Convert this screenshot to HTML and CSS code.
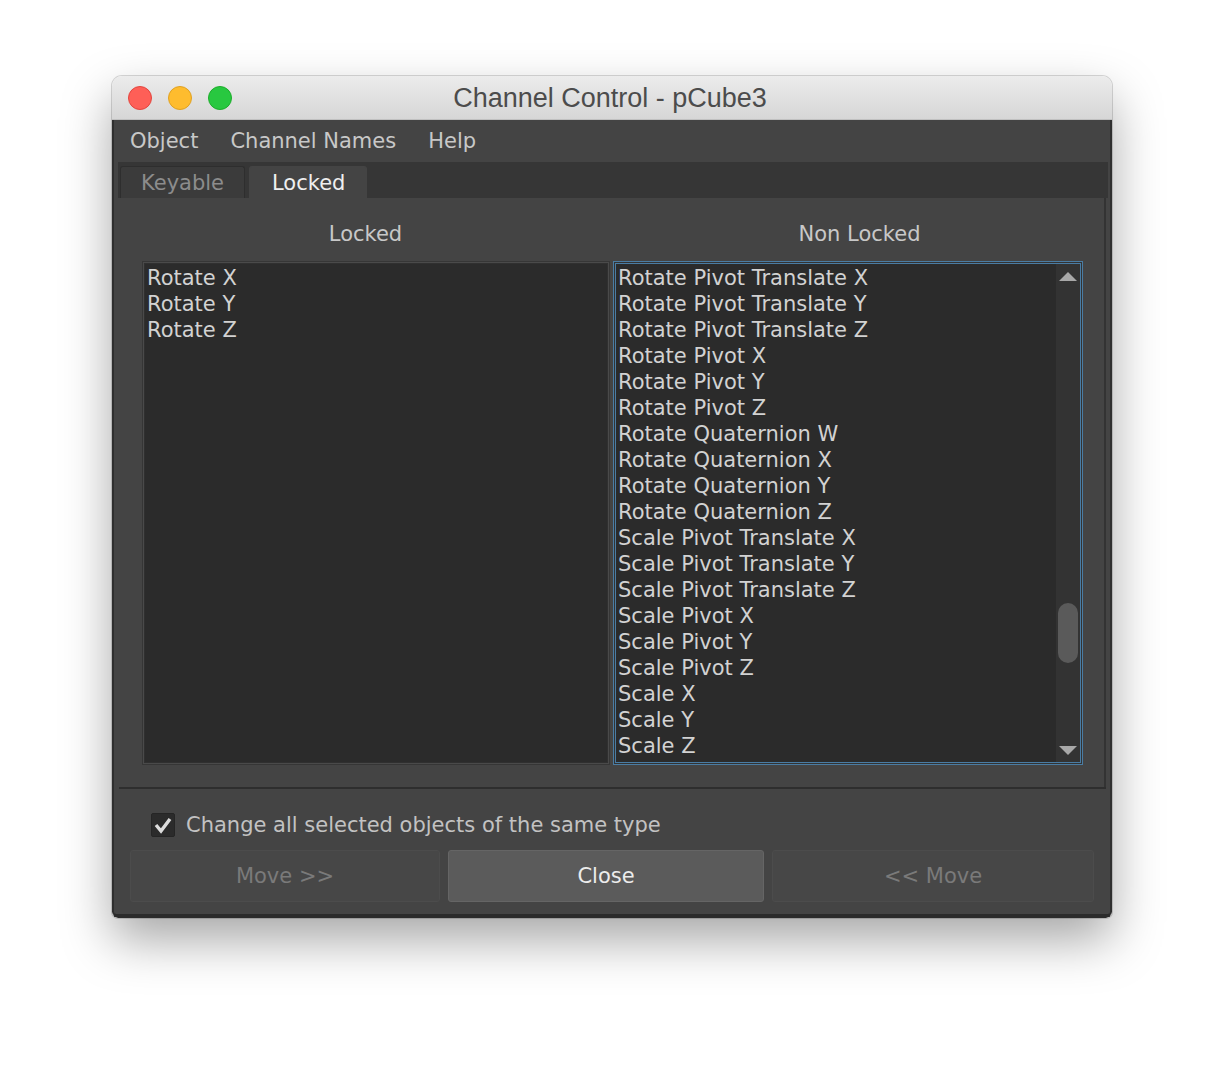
FILE: index.html
```html
<!DOCTYPE html>
<html lang="en">
<head>
  <meta charset="UTF-8">
  <title>Channel Control - pCube3</title>
  <link rel="stylesheet" href="styles.css">
</head>
<body>
  <div class="window">
    <div class="titlebar">
      <div class="lights">
        <span class="light red"></span>
        <span class="light yellow"></span>
        <span class="light green"></span>
      </div>
      <div class="title">Channel Control - pCube3</div>
    </div>
    <div class="content">
      <div class="menubar">
        <span>Object</span>
        <span>Channel Names</span>
        <span>Help</span>
      </div>
      <div class="tabs">
        <div class="tab">Keyable</div>
        <div class="tab active">Locked</div>
      </div>
      <div class="panel">
        <div class="headers">
          <div class="header left">Locked</div>
          <div class="header right">Non Locked</div>
        </div>
        <div class="lists">
          <div class="list locked-list">
            <div class="items">
              <div>Rotate X</div>
              <div>Rotate Y</div>
              <div>Rotate Z</div>
            </div>
          </div>
          <div class="list focused">
            <div class="items">
              <div>Rotate Pivot Translate X</div>
              <div>Rotate Pivot Translate Y</div>
              <div>Rotate Pivot Translate Z</div>
              <div>Rotate Pivot X</div>
              <div>Rotate Pivot Y</div>
              <div>Rotate Pivot Z</div>
              <div>Rotate Quaternion W</div>
              <div>Rotate Quaternion X</div>
              <div>Rotate Quaternion Y</div>
              <div>Rotate Quaternion Z</div>
              <div>Scale Pivot Translate X</div>
              <div>Scale Pivot Translate Y</div>
              <div>Scale Pivot Translate Z</div>
              <div>Scale Pivot X</div>
              <div>Scale Pivot Y</div>
              <div>Scale Pivot Z</div>
              <div>Scale X</div>
              <div>Scale Y</div>
              <div>Scale Z</div>
            </div>
            <div class="scrollbar">
              <div class="arrow"><span class="tri up"></span></div>
              <div class="track"><div class="thumb"></div></div>
              <div class="arrow"><span class="tri down"></span></div>
            </div>
          </div>
        </div>
      </div>
      <div class="separator"></div>
      <label class="option">
        <span class="checkbox">
          <svg width="22" height="22" viewBox="0 0 22 22"><polyline points="4,11 9,17 18,5" fill="none" stroke="#dcdcdc" stroke-width="3.4"/></svg>
        </span>
        Change all selected objects of the same type
      </label>
      <div class="buttons">
        <button class="btn disabled move-right">Move &gt;&gt;</button>
        <button class="btn close">Close</button>
        <button class="btn disabled move-left">&lt;&lt; Move</button>
      </div>
    </div>
  </div>
</body>
</html>
```

FILE: styles.css
```css
body {
  margin: 0;
  padding-bottom: 150px;
  background-color: #ffffff;
  font-family: "DejaVu Sans", Verdana, sans-serif;
}

.window {
  width: 1000px;
  margin: 76px 0 0 112px;
  border-radius: 10px 10px 6px 6px;
  overflow: hidden;
  box-shadow: 0 22px 50px rgba(0, 0, 0, 0.35), 0 0 0 1px rgba(0, 0, 0, 0.15);
}

.titlebar {
  height: 44px;
  display: flex;
  align-items: center;
  position: relative;
  background: linear-gradient(#ececec, #d6d6d6);
  box-sizing: border-box;
  border-bottom: 1px solid #c0c0c0;
}

.lights {
  display: flex;
  gap: 16px;
  padding-left: 16px;
  position: absolute;
  left: 0;
  top: 10px;
}

.light {
  width: 22px;
  height: 22px;
  border-radius: 50%;
  border: 1px solid transparent;
}

.red { background: #fe5f57; border-color: #e2463f; }
.yellow { background: #febc2e; border-color: #dfa123; }
.green { background: #28c840; border-color: #1dad2b; }

.title {
  flex: 1;
  text-align: center;
  font-family: "Liberation Sans", Arial, sans-serif;
  font-size: 27px;
  color: #4c4c4c;
  padding: 2px 4px 0 0;
}

.content {
  background-color: #444444;
  border: 2px solid #2f2f2f;
  border-top: none;
  border-bottom: 4px solid #2b2b2b;
  border-radius: 0 0 6px 6px;
  padding-bottom: 12px;
}

.menubar {
  height: 42px;
  display: flex;
  align-items: center;
  padding-left: 16px;
  gap: 32px;
  font-size: 21px;
  color: #c8c8c8;
}

.tabs {
  height: 36px;
  margin: 0 2px 0 4px;
  padding-left: 2px;
  background-color: #363636;
  display: flex;
  align-items: flex-end;
  gap: 4px;
}

.tab {
  height: 32px;
  box-sizing: border-box;
  padding: 0 20px;
  display: flex;
  align-items: center;
  font-size: 21px;
  color: #8c8c8c;
  background-color: #3b3b3b;
  border: 1px solid #2e2e2e;
  border-bottom: none;
  border-radius: 3px 3px 0 0;
}

.tab.active {
  background-color: #444444;
  color: #efefef;
  border-color: #444444;
  padding: 0 21px 0 22px;
}

.panel {
  margin: 0 4px 0 4px;
  padding: 21px 21px 22px 24px;
  border-right: 2px solid #333333;
}

.headers {
  display: flex;
  gap: 3px;
  height: 30px;
  margin-bottom: 12px;
}

.header {
  flex: 1;
  text-align: center;
  font-size: 21px;
  line-height: 30px;
  color: #c8c8c8;
}

.header.left { padding-right: 22px; }
.header.right { padding-left: 22px; }

.lists {
  display: flex;
  gap: 3px;
  height: 504px;
}

.list {
  flex: 1;
  display: flex;
  background-color: #2b2b2b;
  border: 1px solid #363636;
  box-shadow: inset 0 0 0 1px #4a4a4a, inset 0 0 0 2px #303030;
  padding: 2px;
  overflow: hidden;
}

.list.locked-list {
  flex: 0 0 468px;
  box-sizing: border-box;
}

.list.focused {
  border-color: #4a7ca3;
  box-shadow: inset 0 0 0 1px #333333, inset 0 0 0 2px #4a7ca3;
}

.items {
  flex: 1;
  padding: 1px 0 0 2px;
  font-size: 21px;
  line-height: 26px;
  color: #d2d2d2;
  white-space: nowrap;
  overflow: hidden;
}

.focused .items {
  padding-left: 2px;
}

.scrollbar {
  width: 24px;
  display: flex;
  flex-direction: column;
  background-color: #333333;
}

.arrow {
  height: 24px;
  display: flex;
  align-items: center;
  justify-content: center;
}

.tri {
  width: 0;
  height: 0;
  border-left: 9px solid transparent;
  border-right: 9px solid transparent;
}

.tri.up { border-bottom: 9px solid #a8a8a8; }
.tri.down { border-top: 9px solid #a8a8a8; }

.track {
  flex: 1;
}

.thumb {
  width: 20px;
  height: 60px;
  margin: 315px auto 0;
  border-radius: 10px;
  background-color: #5a5a5a;
}

.separator {
  height: 2px;
  margin: 0 4px 0 5px;
  background-color: #2e2e2e;
}

.option {
  display: flex;
  align-items: center;
  gap: 11px;
  padding-left: 37px;
  margin-top: 24px;
  height: 24px;
  font-size: 21px;
  color: #c2c2c2;
}

.checkbox {
  width: 24px;
  height: 24px;
  box-sizing: border-box;
  background-color: #2b2b2b;
  border: 1px solid #252525;
  border-radius: 2px;
  display: flex;
  align-items: center;
  justify-content: center;
}

.buttons {
  display: flex;
  gap: 8px;
  padding: 0 16px;
  margin-top: 13px;
}

.btn {
  height: 52px;
  font-family: "DejaVu Sans", Verdana, sans-serif;
  font-size: 21px;
  border-radius: 3px;
  border: 1px solid #4c4c4c;
  background-color: #474747;
  color: #7a7a7a;
}

.move-right { width: 310px; }
.close {
  width: 316px;
  background-color: #5b5b5b;
  border-color: #656565;
  color: #ececec;
}
.move-left { width: 322px; }
```
